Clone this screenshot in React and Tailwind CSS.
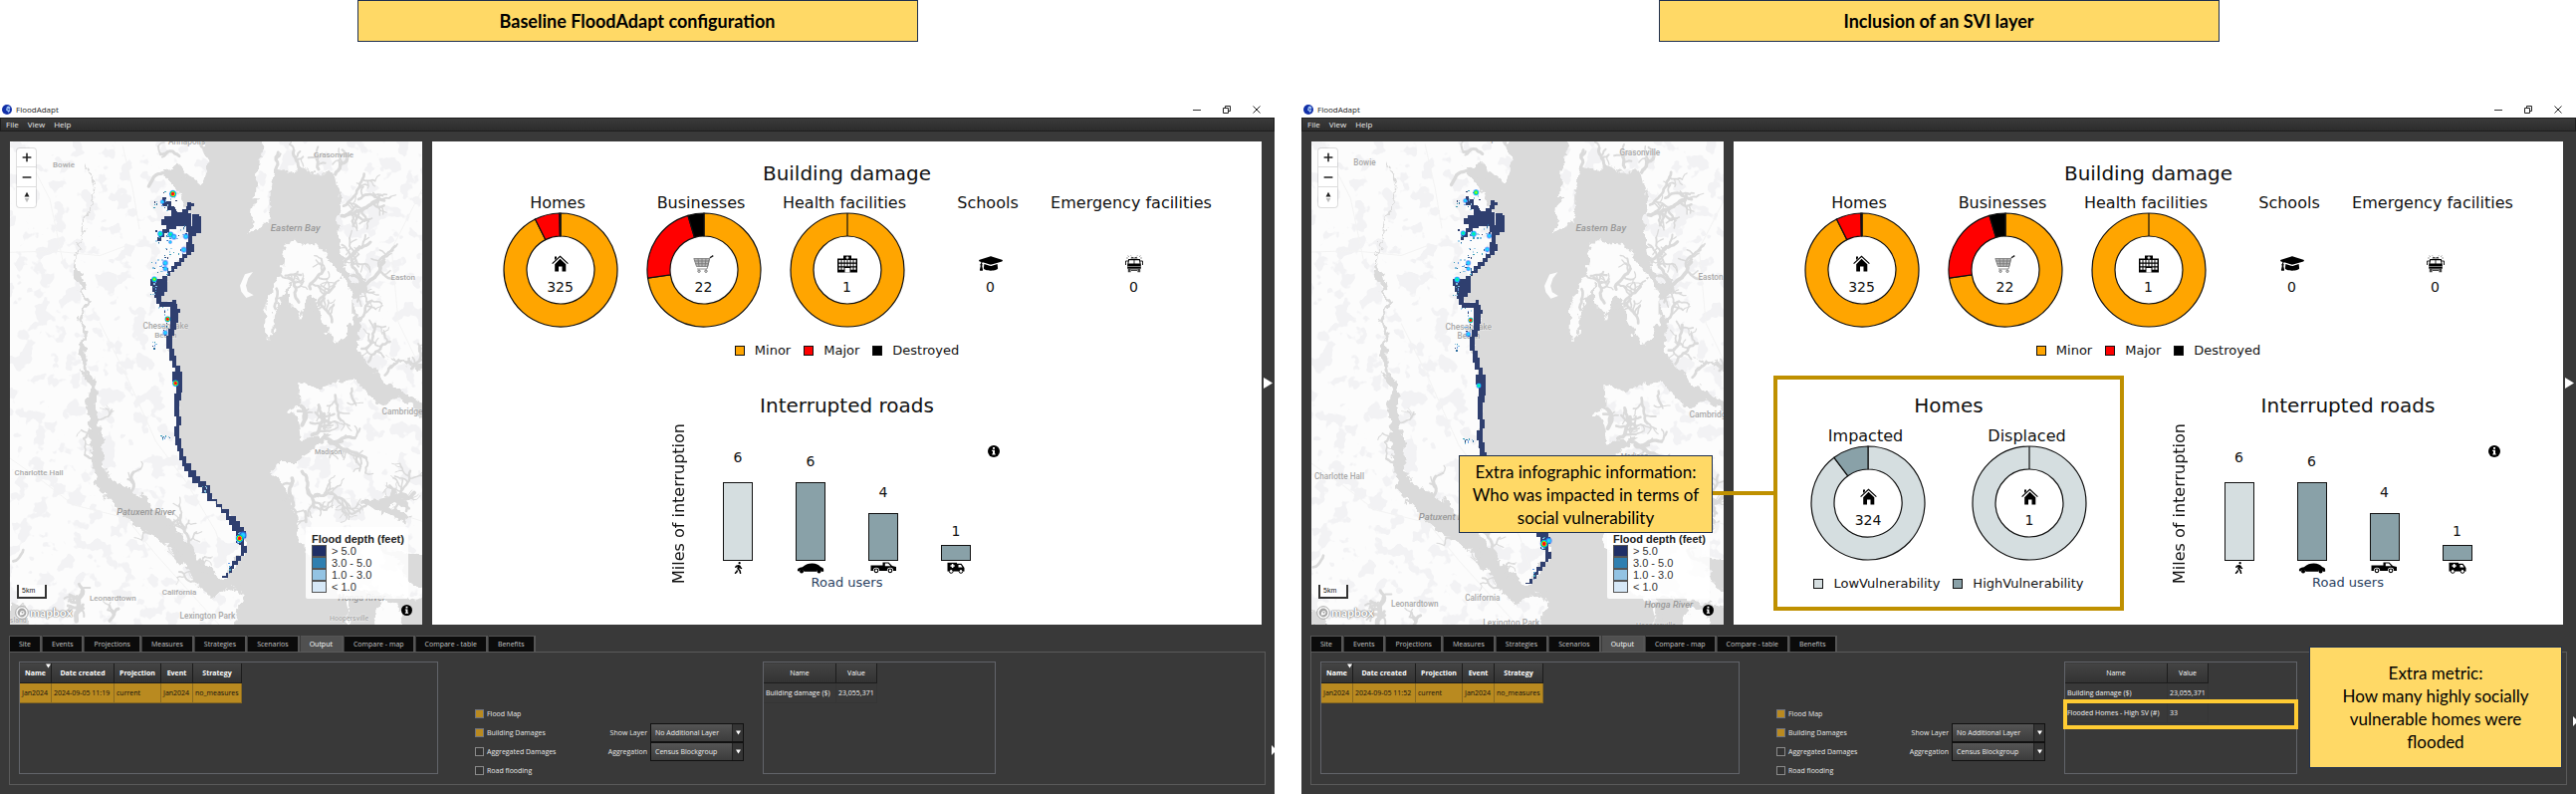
import React from "react";
import { FaGraduationCap, FaWalking } from "react-icons/fa";

/* ---------- map drawing ---------- */

function makeRandom(seed) {
  let s = seed;
  return () => {
    s = (s * 1664525 + 1013904223) % 4294967296;
    return s / 4294967296;
  };
}

function growCreek(rand, x, y, angle, length, width, depth, out) {
  let px = x;
  let py = y;
  let a = angle;
  const steps = Math.max(3, Math.round(length / 10));
  let d = `M${px.toFixed(0)} ${py.toFixed(0)}`;
  for (let i = 0; i < steps; i++) {
    a += (rand() - 0.5) * 1.3 + (angle - a) * 0.2;
    px += Math.cos(a) * 8;
    py += Math.sin(a) * 8;
    d += `L${px.toFixed(0)} ${py.toFixed(0)}`;
    if (depth > 0 && i > 0 && rand() < 0.38) {
      const side = rand() < 0.5 ? -1 : 1;
      growCreek(rand, px, py, a + side * (0.7 + rand() * 0.6), length * 0.35, width * 0.65, depth - 1, out);
    }
  }
  out.push({ d, w: width });
}

const creekSeeds = [
  [500, 250, 3.4, 90, 10], [540, 200, 3.8, 80, 9], [620, 190, 4.2, 40, 8], [560, 270, 2.8, 50, 8],
  [830, 240, 4.9, 70, 9], [900, 235, 4.6, 70, 9], [960, 240, 4.7, 60, 9], [1010, 255, 5.3, 90, 10],
  [1030, 380, 5.9, 150, 11], [1035, 350, 5.4, 150, 8], [1080, 330, 6.1, 110, 8],
  [1040, 520, 5.4, 130, 9], [1060, 590, 5.6, 170, 11], [1090, 580, 5.1, 160, 9], [1060, 560, 0.1, 90, 9],
  [860, 560, 5.6, 60, 7], [900, 640, 4.7, 110, 9], [935, 600, 5.0, 100, 9], [960, 650, 5.3, 100, 8],
  [1000, 700, 5.4, 110, 8], [1070, 700, 5.6, 110, 8], [1090, 780, 5.9, 120, 8], [1110, 820, 5.6, 120, 8],
  [830, 660, 4.9, 80, 8], [1160, 860, 5.2, 80, 8], [1240, 840, 5.1, 90, 8],
  [910, 1010, 5.3, 80, 12], [940, 1040, 5.6, 100, 11], [980, 1050, 5.9, 120, 10], [960, 950, 1.2, 90, 9],
  [1010, 920, 1.7, 100, 8], [990, 1060, 0.2, 160, 9], [1060, 900, 1.3, 60, 7],
  [880, 1170, 1.1, 120, 11], [910, 1150, 1.3, 150, 10], [950, 1220, 0.4, 150, 8], [1010, 1230, 0.1, 170, 7],
  [1190, 1260, 4.9, 160, 7], [1150, 1240, 0.3, 100, 18], [870, 1240, 1.0, 70, 8], [920, 1270, 1.9, 40, 8],
  [395, 1210, 5.0, 80, 9], [290, 1000, 5.6, 80, 5], [280, 1025, 3.4, 50, 7], [290, 1120, 3.3, 50, 7],
  [580, 1380, 4.7, 140, 8], [560, 1420, 3.5, 80, 7], [640, 1460, 4.5, 70, 7], [610, 1450, 5.1, 90, 6],
  [470, 1330, 2.4, 50, 7], [700, 1500, 0.2, 40, 7], [230, 1600, 4.6, 120, 14], [330, 1600, 5.3, 60, 9],
  [40, 1420, 5.7, 60, 8], [590, 1480, 3.2, 80, 6], [1060, 1600, 4.4, 50, 8], [1180, 1400, 4.2, 60, 10],
];

const creeks = (() => {
  const out = [];
  const rand = makeRandom(77);
  creekSeeds.forEach(([x, y, a, len, w]) => growCreek(rand, x, y, a, len, w, 2, out));
  return out;
})();

const fringeAreas = [
  [480, 350, 28, 16, 12], [510, 320, 20, 16, 8], [490, 440, 22, 18, 12], [530, 490, 36, 18, 14],
  [515, 440, 24, 16, 12], [555, 430, 14, 22, 8], [475, 530, 20, 22, 12], [462, 590, 8, 30, 10],
  [490, 660, 16, 14, 7], [500, 540, 22, 16, 8], [495, 720, 8, 22, 7], [462, 765, 5, 18, 8],
  [502, 1045, 22, 6, 12], [612, 1205, 10, 12, 8], [715, 1345, 6, 20, 10], [692, 1440, 8, 20, 6],
];

const fringe = (() => {
  const rand = makeRandom(9);
  const colours = ["#2f6f9f", "#86bfe0", "#2f4070", "#6a9fe8", "#3f9fb8", "#a9d3ec"];
  const out = [];
  fringeAreas.forEach(([cx, cy, rx, ry, n]) => {
    for (let i = 0; i < n; i++) {
      const x = Math.round((cx + (rand() - 0.5) * 2 * rx) / 3) * 3;
      const y = Math.round((cy + (rand() - 0.5) * 2 * ry) / 3) * 3;
      out.push({ x, y, w: rand() < 0.4 ? 6 : 3, h: rand() < 0.3 ? 6 : 3, c: colours[Math.floor(rand() * 6)] });
    }
  });
  return out;
})();

const baselineSpots = [
  ["hot", 521, 314, 11], ["cool", 483, 434, 9], ["cool", 514, 436, 9], ["blue", 524, 443, 9], ["blue", 560, 442, 9],
  ["blue", 554, 482, 9], ["blue", 498, 522, 9], ["blue", 498, 539, 8], ["warm", 465, 571, 9], ["hot", 505, 691, 9],
  ["blue", 498, 732, 8], ["blue", 489, 338, 7], ["hot", 529, 884, 10], ["blue", 732, 1342, 12], ["hot", 722, 1351, 12],
  ["blue", 513, 459, 6],
];

const sviSpots = [
  ["warm", 521, 314, 9], ["cool", 483, 434, 8], ["cool", 514, 436, 9], ["blue", 560, 442, 8], ["blue", 554, 482, 8],
  ["blue", 498, 522, 8], ["blue", 498, 539, 7], ["cool", 465, 571, 9], ["hot", 505, 691, 8], ["blue", 498, 732, 8],
  ["blue", 489, 338, 7], ["cool", 529, 884, 8], ["blue", 736, 1342, 10], ["hot", 722, 1351, 12],
];

const places = [
  ["Annapolis", 563, 164, false, 25], ["Bowie", 192, 235, false, 24], ["Grasonville", 1005, 203, false, 24],
  ["Easton", 1214, 573, false, 24], ["Chesapeake", 499, 719, false, 25], ["Beach", 499, 747, false, 24],
  ["Charlotte Hall", 117, 1160, false, 24], ["Cambridge", 1212, 979, false, 25], ["Madison", 989, 1098, false, 21],
  ["California", 540, 1520, false, 24], ["Leonardtown", 340, 1538, false, 24], ["Lexington Park", 625, 1592, false, 25],
  ["Hoopersville", 1052, 1598, false, 21], ["Eastern Bay", 890, 427, true, 29], ["Patuxent River", 440, 1281, true, 28],
  ["Honga River", 1090, 1540, true, 27], ["Island", 52, 1604, false, 21],
];

function Terrain({ id, variant }) {
  const spots = variant === "svi" ? sviSpots : baselineSpots;
  return (
    <svg viewBox="30 156 1242 1455" preserveAspectRatio="xMidYMid slice" className="absolute inset-0 h-full w-full" aria-hidden="true">
      <defs>
        <filter id={`${id}-coast`} x="-5%" y="-5%" width="110%" height="110%" colorInterpolationFilters="sRGB">
          <feTurbulence type="fractalNoise" baseFrequency="0.04" numOctaves="3" seed="4" result="n" />
          <feDisplacementMap in="SourceGraphic" in2="n" scale="36" xChannelSelector="R" yChannelSelector="G" />
        </filter>
        <filter id={`${id}-patch`} x="0" y="0" width="100%" height="100%" colorInterpolationFilters="sRGB">
          <feTurbulence type="fractalNoise" baseFrequency="0.02" numOctaves="3" seed="12" />
          <feColorMatrix values="0 0 0 0 .95 0 0 0 0 .95 0 0 0 0 .958 20 0 0 0 -11.2" />
        </filter>
        <radialGradient id={`${id}-hot`}>
          <stop offset="0" stopColor="#f00" /><stop offset=".4" stopColor="#f22" /><stop offset=".52" stopColor="#dd0" />
          <stop offset=".68" stopColor="#0d5" /><stop offset=".82" stopColor="#0bf" /><stop offset="1" stopColor="#35f" stopOpacity=".4" />
        </radialGradient>
        <radialGradient id={`${id}-warm`}>
          <stop offset="0" stopColor="#ef0" /><stop offset=".5" stopColor="#1e5" /><stop offset=".75" stopColor="#0cf" />
          <stop offset="1" stopColor="#35f" stopOpacity=".4" />
        </radialGradient>
        <radialGradient id={`${id}-cool`}>
          <stop offset="0" stopColor="#1e7" /><stop offset=".45" stopColor="#0ec" /><stop offset=".7" stopColor="#1bf" />
          <stop offset="1" stopColor="#35f" stopOpacity=".4" />
        </radialGradient>
        <radialGradient id={`${id}-blue`}>
          <stop offset="0" stopColor="#2ef" /><stop offset=".5" stopColor="#2bf" /><stop offset="1" stopColor="#35f" stopOpacity=".4" />
        </radialGradient>
      </defs>
      <rect x="0" y="100" width="1300" height="1600" fill="#fcfcfc" />
      <g transform={variant === "svi" ? "translate(270 525) scale(1.02) translate(-270 -525)" : undefined}>
        <rect x="0" y="100" width="1300" height="1550" filter={`url(#${id}-patch)`} />
        <g fill="none" stroke="#f3f3f3" strokeWidth="3">
          <path d="M30 490L160 486 300 500 380 470 M60 156L150 330 190 520 M30 1110L130 1180 220 1250 380 1290 470 1400 560 1500 660 1611 M370 170L400 300 420 420 M300 700L380 860 470 1060 560 1180 650 1330 690 1450 M1272 300L1180 480 1200 700 1272 850 M930 1250L1060 1230 1272 1300" />
        </g>
        <g filter={`url(#${id}-coast)`} fill="#dadada">
          <path d="M600 130 805 130 775 235 770 330 752 435 812 392 812 290 832 240 870 250 900 236 950 250 1010 250 1030 330 1015 400 1030 500 1062 590 1100 570 1110 600 1060 640 1085 700 1075 770 1100 820 1150 870 1200 900 1290 960 1290 830 1150 800 1290 850 1290 990 1200 925 1150 950 1100 910 1070 872 1010 880 960 900 900 878 905 950 868 966 900 1000 910 1050 1000 1040 950 1075 890 1122 830 1122 816 1150 862 1205 890 1285 900 1360 930 1400 960 1480 1040 1530 1050 1640 705 1640 715 1560 742 1522 690 1500 640 1530 600 1500 560 1440 500 1370 420 1320 350 1260 290 1190 280 1140 275 1090 270 1030 262 960 275 900 240 840 290 870 284 960 300 1020 312 1060 306 1095 330 1170 420 1220 520 1300 580 1390 630 1440 676 1476 720 1410 738 1395 738 1350 690 1290 625 1210 560 1130 530 1060 535 970 540 880 515 810 512 740 530 680 522 640 480 640 490 590 520 540 580 480 565 430 590 420 600 380 570 370 530 300 480 240 540 230 610 290 625 225Z" />
          <path d="M860 470 880 458 960 470 1000 520 1040 580 1060 620 1060 700 1020 766 965 700 960 645 930 610 905 680 870 640 870 570 825 680 822 745 798 745 800 640 850 545Z" fill="#fcfcfc" />
          <path d="M1090 1240 1160 1235 1240 1290 1215 1300 1150 1275ZM1180 1390 1290 1400 1290 1500 1240 1490ZM30 1560 70 1540 90 1620 30 1620Z" />
          <path d="M1050 1500 1290 1540 1290 1640 1050 1640Z" />
          <path d="M1150 1540 1200 1550 1220 1640 1120 1640Z" fill="#fcfcfc" />
        </g>
        <path d="M762 549 738 556 723 590 727 608 742 627 764 619 746 608 741 590 748 568Z" fill="#fcfcfc" />
        <g fill="none" stroke="#dadada" strokeLinejoin="round" filter={`url(#${id}-coast)`}>
          <path d="M255 220L285 290 275 350 250 400 240 480 225 495 225 540" strokeWidth="4" />
          <path d="M225 530L245 600 262 640 240 690 258 740 245 790 262 850 280 900" strokeWidth="10" />
          <path d="M228 540L250 600" strokeWidth="20" />
        </g>
        <g fill="none" stroke="#dadada" strokeLinecap="round" strokeLinejoin="round">
          {creeks.map((c, i) => (
            <path key={i} d={c.d} strokeWidth={c.w} />
          ))}
        </g>
        <g stroke="#fcfcfc" strokeOpacity=".5" textAnchor="middle" className="[font-family:Roboto,'Liberation_Sans',sans-serif] font-medium [paint-order:stroke]">
          {places.map(([name, x, y, italic, size]) => (
            <text key={name} x={x} y={y} fontSize={size} fontStyle={italic ? "italic" : "normal"} fill={italic ? "#989898" : "#a8a8a8"} strokeWidth={italic ? 0 : 3}>
              {name}
            </text>
          ))}
        </g>
        <g shapeRendering="crispEdges">
          <path
            fill="#2f3f6f"
            d="M480 350H490V325H500V335H515V350H525L535 370H550V360H560V350H565V338H575V343H585V352H575V362H568V372H575V410H580V375H600V382H606V432H590V440H580V465H585V488H575V498H565V508H555V520H545V530H535V540H525V550H512V560H505V610H495V622H485V640H520V632H530V645H535V660H542V672H536V702H532V722H526V740H518V780H525V800H532V830H542V850H550V912H545V935H540V985H545V1010H540V1050H545V1080H552V1105H562V1125H575V1145H590V1165H602V1180H620V1190H632V1215H640V1232H655V1248H670V1264H690V1285H710V1300H722V1318H735V1330H742V1350H735V1375H744V1395H735V1405H725V1418H716V1430H706V1442H698V1455H688V1470H668V1465H680V1455H690V1435H700V1420H712V1405H725V1370H720V1345H710V1330H700V1310H690V1295H680V1275H665V1258H650V1240H625V1215H610V1198H598V1185H580V1168H568V1150H555V1135H548V1115H540V1090H533V1070H528V1045H524V1015H532V985H526V915H530V880H520V850H528V838H518V815H510V780H502V740H508V720H514V700H514V655H480V645H470V628H465V608H458V590H452V570H490V560H505V545H515V530H525V520H540V508H550V495H560V460H568V430H560V412H530V420H510V432H495V445H485V455H475V445H480V432H490V420H500V408H485V390H495V380H515V362H505V350Z"
          />
          {fringe.map((f, i) => (
            <rect key={i} x={f.x} y={f.y} width={f.w} height={f.h} fill={f.c} />
          ))}
        </g>
        {spots.map(([kind, x, y, r], i) => (
          <ellipse key={i} cx={x} cy={y} rx={r} ry={r * 1.05} fill={`url(#${id}-${kind})`} />
        ))}
      </g>
    </svg>
  );
}

function InfoDot({ className }) {
  return (
    <svg viewBox="0 0 12 12" className={className} aria-hidden="true">
      <circle cx="6" cy="6" r="6" fill="#000" />
      <path d="M5 2h2v1.8H5zM4.2 4.8H7v3.6h.8v1.2H4.2V8.4H5V6h-.8z" fill="#fff" />
    </svg>
  );
}

const depths = [
  ["> 5.0", "bg-[#1f2f66]"],
  ["3.0 - 5.0", "bg-[#2f7fb0]"],
  ["1.0 - 3.0", "bg-[#93c3e3]"],
  ["< 1.0", "bg-[#d6e8f7]"],
];

function FloodMap({ id, variant }) {
  return (
    <div className="relative w-[414px] shrink-0 overflow-hidden bg-[#fcfcfc]">
      <Terrain id={id} variant={variant} />
      <div className="absolute top-[7px] left-[7px] flex w-[19px] flex-col divide-y divide-[#ddd] rounded-[3px] bg-white shadow-[0_0_0_1px_rgba(0,0,0,0.12)]">
        <button type="button" aria-label="Zoom in" className="flex h-[19px] items-center justify-center">
          <svg viewBox="0 0 10 10" className="size-[10px]"><path d="M5 1.2v7.6M1.2 5h7.6" stroke="#222" strokeWidth="1.6" strokeLinecap="round" /></svg>
        </button>
        <button type="button" aria-label="Zoom out" className="flex h-[20px] items-center justify-center">
          <svg viewBox="0 0 10 10" className="size-[10px]"><path d="M1.2 5h7.6" stroke="#222" strokeWidth="1.6" strokeLinecap="round" /></svg>
        </button>
        <button type="button" aria-label="Reset bearing to north" className="flex h-[20px] items-center justify-center">
          <svg viewBox="0 0 10 12" className="h-[12px] w-[10px]"><path d="M5 .8 7.5 5.6H2.5z" fill="#222" /><path d="M5 11.2 7.3 7H2.7z" fill="#bbb" /></svg>
        </button>
      </div>
      <div className="absolute bottom-[26px] left-[7px] h-[14px] w-[30px] border-2 border-t-0 border-[#333] bg-white/70 pl-[3px] [font-family:'Liberation_Sans',Arial,sans-serif] text-[7px] leading-[12px] text-[#222]">
        5km
      </div>
      <div className="absolute bottom-[5px] left-[5px] flex items-center gap-px">
        <svg viewBox="0 0 14 14" className="size-[14px]" aria-hidden="true">
          <circle cx="7" cy="7" r="6.3" fill="#fff" stroke="#a5a5a5" />
          <circle cx="7" cy="7" r="4.4" fill="#a5a5a5" />
          <path d="M5 9.4c-.4-2 .1-4 2-4.5 1.6-.2 2.8 1 2.5 2.4C9 9 7 9.7 5 9.4z" fill="#fff" />
          <circle cx="7.5" cy="6.8" r="1" fill="#a5a5a5" />
        </svg>
        <span className="[font-family:Lato,sans-serif] text-[12px] leading-[14px] font-bold text-white [text-shadow:0_0_1px_#777,0_0_1px_#777,0_0_2px_#999]">mapbox</span>
      </div>
      <div className="absolute right-[14px] bottom-[26px] w-[103px] rounded-[2px] bg-white/85 px-[6px] pt-[6px] pb-[6px] [font-family:'Liberation_Sans',Arial,sans-serif] text-[11px] leading-[12px] text-[#333]">
        <p className="font-bold whitespace-nowrap text-[#222]">Flood depth (feet)</p>
        <ul>
          {depths.map(([label, colour]) => (
            <li key={label} className="flex items-center gap-[5px]">
              <span className={`h-[12px] w-[15px] border border-[#555] ${colour}`} />
              {label}
            </li>
          ))}
        </ul>
      </div>
      <button type="button" aria-label="Map information" className="absolute right-[10px] bottom-[9px]">
        <InfoDot className="size-[11px]" />
      </button>
    </div>
  );
}

/* ---------- infographic ---------- */

function HomeIcon() {
  return (
    <svg viewBox="0 0 17 17" className="h-[17px] w-[17px]" aria-hidden="true">
      <path d="M8.5 3.8 14.3 9.2V16.5H10.5V11.5H7V16.5H3.2V9.2Z" fill="#000" />
      <path d="M.6 8.6 8.5 1.2 16.4 8.6" fill="none" stroke="#000" strokeWidth="1.2" />
      <path d="M3 1.5H5V3.2L3 5Z" fill="#000" />
    </svg>
  );
}

function CartIcon() {
  return (
    <svg viewBox="0 0 21 18" className="h-[18px] w-[21px]" aria-hidden="true">
      <path d="M.8 3.5H16.5L14.8 11.5H3.5Z" fill="#b5b5b5" />
      <path d="M.8 3.5H16.5L14.8 11.5H3.5ZM1.5 6H16M2.4 8.7H15.4M5 3.5 6 11.5M9 3.5V11.5M13 3.5 12 11.5M4 14H14L17 2.5 20 .8" fill="none" stroke="#777" strokeWidth=".8" />
      <path d="M17 2.8 20.3.6" stroke="#222" strokeWidth="1.3" />
      <circle cx="6" cy="16.2" r="1.2" fill="none" stroke="#555" strokeWidth=".8" />
      <circle cx="13" cy="16.2" r="1.2" fill="none" stroke="#555" strokeWidth=".8" />
    </svg>
  );
}

function HospitalIcon() {
  return (
    <svg viewBox="0 0 20 18" className="h-[18px] w-[20px]" aria-hidden="true">
      <path d="M0 3.5H6V.5H14V3.5H20V17.5H0Z" fill="#000" />
      <path d="M9.5 1.2h1v1h1v1h-1v1h-1v-1h-1v-1h1zM1.5 5h2v2.5h-2zM4.5 5h2v2.5h-2zM7.5 5h2v2.5h-2zM10.5 5h2v2.5h-2zM13.5 5h2v2.5h-2zM16.5 5h2v2.5h-2zM1.5 8.8h2v2.5h-2zM4.5 8.8h2v2.5h-2zM7.5 8.8h2v2.5h-2zM10.5 8.8h2v2.5h-2zM13.5 8.8h2v2.5h-2zM16.5 8.8h2v2.5h-2zM1.5 12.5h2v2.2h-2zM4.5 12.5h2v2.2h-2zM16.5 12.5h2v2.2h-2zM13.5 12.5h2v2.2h-2zM7.5 13h5v4.5h-5z" fill="#fff" />
    </svg>
  );
}

function SchoolIcon() {
  return <FaGraduationCap className="h-[19px] w-[24px] text-black" aria-hidden="true" />;
}

function EmergencyIcon() {
  return (
    <svg viewBox="0 0 18 18" className="h-[18px] w-[18px]" aria-hidden="true">
      <path d="M5.5 3.5a1.8 1.8 0 0 1 3.5 0 1.8 1.8 0 0 1 3.5 0z" fill="#333" />
      <path d="M2.5.6 4 1.8M1 3h2M15.5.6 14 1.8M17 3h-2M5.6.3 6.4 1.3M12.4.3 11.6 1.3" stroke="#777" strokeWidth=".7" />
      <path d="M3.2 4H14.8L15.8 9.5V13.8H2.2V9.5Z" fill="#000" />
      <path d="M4 5.2H8.6V8.5H3.4zM9.4 5.2H14L14.6 8.5H9.4z" fill="#fff" />
      <path d="M.5 6v4M17.5 6v4M.5 6H3M15 6h2.5" stroke="#222" strokeWidth="1" />
      <path d="M2.2 11.5H15.8M4 14.5H14" stroke="#aaa" strokeWidth=".7" />
      <path d="M2.8 14H5.6V17.3H2.8zM12.4 14H15.2V17.3H12.4zM6 14.5h6v1.6H6z" fill="#444" />
    </svg>
  );
}

function Ring({ slices }) {
  const c = 58;
  const outer = 57;
  const inner = 34;
  const point = (r, f) => {
    const a = f * Math.PI * 2 - Math.PI / 2;
    return `${(c + r * Math.cos(a)).toFixed(2)} ${(c + r * Math.sin(a)).toFixed(2)}`;
  };
  let at = 0;
  const total = slices.reduce((s, x) => s + x.value, 0);
  return (
    <svg viewBox="0 0 116 116" className="absolute inset-0 h-full w-full" aria-hidden="true">
      {slices.map((s, i) => {
        const from = at / total;
        at += s.value;
        const to = at / total;
        if (slices.length === 1) {
          return (
            <g key={i}>
              <circle cx={c} cy={c} r={(outer + inner) / 2} fill="none" stroke={s.colour} strokeWidth={outer - inner} />
              <circle cx={c} cy={c} r={outer} fill="none" stroke="#111" strokeWidth="1.2" />
              <circle cx={c} cy={c} r={inner} fill="none" stroke="#111" strokeWidth="1.2" />
              <path d={`M${c} ${c - outer}V${c - inner}`} stroke="#111" strokeWidth="1.2" />
            </g>
          );
        }
        const big = to - from > 0.5 ? 1 : 0;
        return (
          <path
            key={i}
            d={`M${point(outer, from)}A${outer} ${outer} 0 ${big} 1 ${point(outer, to)}L${point(inner, to)}A${inner} ${inner} 0 ${big} 0 ${point(inner, from)}Z`}
            fill={s.colour}
            stroke="#111"
            strokeWidth="1.2"
          />
        );
      })}
    </svg>
  );
}

function Donut({ label, Icon, count, slices }) {
  return (
    <figure className="flex w-[144px] flex-col items-center">
      <figcaption className="pr-[5px] text-[16px] leading-[20px] whitespace-nowrap">{label}</figcaption>
      <div className="relative -mt-px flex size-[116px] flex-col items-center justify-center gap-[4px] pt-[9px]">
        {slices.length > 0 && <Ring slices={slices} />}
        <div className="flex h-[20px] items-center">
          <Icon />
        </div>
        <span className="text-[14px] leading-[18px]">{count}</span>
      </div>
    </figure>
  );
}

function Legend({ items }) {
  return (
    <ul className="flex justify-center gap-[13px] text-[13px] leading-[18px]">
      {items.map(([label, colour]) => (
        <li key={label} className="flex items-center gap-[10px]">
          <span className={`size-[10px] border border-[#111] ${colour}`} />
          {label}
        </li>
      ))}
    </ul>
  );
}

const minor = "#ffa500";
const major = "#ff0000";
const destroyed = "#000000";
const low = "#d5dee0";
const high = "#89a1a8";

const buildings = [
  { label: "Homes", Icon: HomeIcon, count: 325, slices: [{ value: 301, colour: minor }, { value: 23, colour: major }, { value: 1, colour: destroyed }] },
  { label: "Businesses", Icon: CartIcon, count: 22, slices: [{ value: 16, colour: minor }, { value: 5, colour: major }, { value: 1, colour: destroyed }] },
  { label: "Health facilities", Icon: HospitalIcon, count: 1, slices: [{ value: 1, colour: minor }] },
  { label: "Schools", Icon: SchoolIcon, count: 0, slices: [] },
  { label: "Emergency facilities", Icon: EmergencyIcon, count: 0, slices: [] },
];

function CarGlyph() {
  return (
    <svg viewBox="0 0 30 12" className="h-[11px] w-[30px]" aria-hidden="true">
      <path d="M1 9C0 6.5 2 5 6 4.5 10 1.5 13 .5 17 .6 21 .8 24 2 26 4.3 29 5 29.8 6.5 29.3 9.5H27A3 3 0 0 0 21.5 9.6H8A3 3 0 0 0 2.6 9.3Z" fill="#000" />
      <circle cx="5.2" cy="9.2" r="2.2" fill="#000" /><circle cx="24.3" cy="9.2" r="2.2" fill="#000" />
    </svg>
  );
}

function PickupGlyph() {
  return (
    <svg viewBox="0 0 27 12" className="h-[12px] w-[27px]" aria-hidden="true">
      <path d="M.5 3.5H12.5V.4H18.5L22 4 26 5V9H.5Z" fill="#000" />
      <path d="M14.8 1.5H18L20.3 4.3H14.8Z" fill="#fff" />
      <circle cx="6" cy="8.8" r="3.1" fill="#fff" /><circle cx="20" cy="8.8" r="3.1" fill="#fff" />
      <circle cx="6" cy="8.8" r="1.8" fill="none" stroke="#000" strokeWidth="1.2" /><circle cx="20" cy="8.8" r="1.8" fill="none" stroke="#000" strokeWidth="1.2" />
    </svg>
  );
}

function AmbulanceGlyph() {
  return (
    <svg viewBox="0 0 18 12" className="h-[12px] w-[18px]" aria-hidden="true">
      <path d="M.5 .8H10V1.8H14.5L17.5 6V9.5H.5Z" fill="#000" />
      <path d="M4.8 2h1.6v1.3h1.3v1.5H6.4v1.3H4.8V4.8H3.5V3.3h1.3zM11.5 3H14L15.5 5.5H11.5Z" fill="#fff" />
      <circle cx="4.2" cy="9.4" r="1.9" fill="#fff" stroke="#000" /><circle cx="14" cy="9.4" r="1.9" fill="#fff" stroke="#000" />
    </svg>
  );
}

function WalkGlyph() {
  return <FaWalking className="h-[12px] w-[9px] text-black" aria-hidden="true" />;
}

const roads = [
  { value: 6, bar: "h-[79px] bg-[#d5dee0]", gap: "mb-[16px]", Glyph: WalkGlyph, name: "Pedestrians" },
  { value: 6, bar: "h-[79px] bg-[#89a1a8]", gap: "mb-[12px]", Glyph: CarGlyph, name: "Cars" },
  { value: 4, bar: "h-[48px] bg-[#89a1a8]", gap: "mb-[12px]", Glyph: PickupGlyph, name: "Trucks" },
  { value: 1, bar: "h-[16px] bg-[#89a1a8]", gap: "mb-[5px]", Glyph: AmbulanceGlyph, name: "Emergency vehicles" },
];

function RoadsChart() {
  return (
    <section className="relative flex w-[360px] flex-col items-center pt-[18px]">
      <h2 className="text-[20px] leading-[24px]">Interrupted roads</h2>
      <div className="mt-[2px] flex w-full items-end">
        <p className="mb-[2px] h-[170px] w-[22px] rotate-180 text-center text-[16px] leading-[22px] whitespace-nowrap [writing-mode:vertical-rl]">
          Miles of interruption
        </p>
        <div className="flex w-[316px] flex-col items-center">
          <div className="flex items-end gap-[43px]">
            {roads.map(({ value, bar, gap, Glyph, name }) => (
              <div key={name} className="flex w-[30px] flex-col items-center">
                <span className={`text-[14px] leading-[18px] ${gap}`}>{value}</span>
                <span className={`w-full border border-[#111] ${bar}`} />
                <span className="flex h-[14px] items-center justify-center">
                  <Glyph />
                </span>
              </div>
            ))}
          </div>
          <p className="text-[13px] leading-[16px] text-[#2a3f5f]">Road users</p>
        </div>
      </div>
      <button type="button" aria-label="About interrupted roads" className="absolute top-[70px] right-[27px]">
        <InfoDot className="size-[12px]" />
      </button>
    </section>
  );
}

function VulnerabilityPanel() {
  return (
    <section className="relative flex h-[236px] w-[352px] flex-col items-center border-4 border-[#bf9000] pt-[14px]">
      <h2 className="text-[20px] leading-[24px]">Homes</h2>
      <div className="mt-[9px] flex gap-[18px]">
        <Donut label="Impacted" Icon={HomeIcon} count={324} slices={[{ value: 291, colour: low }, { value: 33, colour: high }]} />
        <Donut label="Displaced" Icon={HomeIcon} count={1} slices={[{ value: 1, colour: low }]} />
      </div>
      <div className="mt-[14px]">
        <Legend items={[["LowVulnerability", "bg-[#d5dee0]"], ["HighVulnerability", "bg-[#89a1a8]"]]} />
      </div>
      <div className="absolute top-[112px] right-full mr-[4px] h-[4px] w-[61px] bg-[#bf9000]" />
      <Note className="absolute top-[76px] right-full mr-[65px] h-[78px] w-[255px] pt-[4px]">
        Extra infographic information:
        <br />
        Who was impacted in terms of
        <br />
        social vulnerability
      </Note>
    </section>
  );
}

function Note({ className, children }) {
  return (
    <p className={`z-10 border border-[#1f3050] bg-[#ffd966] text-center [font-family:Lato,'Open_Sans',sans-serif] text-[17px] leading-[23px] whitespace-nowrap text-black ${className}`}>
      {children}
    </p>
  );
}

function Infographic({ variant }) {
  return (
    <div className="h-[485px] min-w-0 flex-1 bg-white [font-family:'DejaVu_Sans',Verdana,sans-serif] text-[#111]">
      <section className="flex h-[235px] flex-col items-center pt-[20px]">
        <h2 className="text-[20px] leading-[24px]">Building damage</h2>
        <div className="mt-[8px] flex">
          {buildings.map((b) => (
            <Donut key={b.label} {...b} />
          ))}
        </div>
        <div className="mt-[14px]">
          <Legend items={[["Minor", "bg-[#ffa500]"], ["Major", "bg-[#ff0000]"], ["Destroyed", "bg-black"]]} />
        </div>
      </section>
      {variant === "svi" ? (
        <div className="flex items-start gap-[45px] pl-[40px]">
          <VulnerabilityPanel />
          <RoadsChart />
        </div>
      ) : (
        <div className="flex justify-center">
          <RoadsChart />
        </div>
      )}
    </div>
  );
}

/* ---------- lower panel ---------- */

const tabs = ["Site", "Events", "Projections", "Measures", "Strategies", "Scenarios", "Output", "Compare - map", "Compare - table", "Benefits"];

function Check({ id, label, checked }) {
  return (
    <div className="flex h-[19px] items-center gap-[3px]">
      <input
        id={id}
        type="checkbox"
        defaultChecked={checked}
        className="size-[9px] appearance-none border border-[#8a8a8a] bg-[#333] checked:border-[#6f7480] checked:bg-[#b98a20]"
      />
      <label htmlFor={id} className="whitespace-nowrap">{label}</label>
    </div>
  );
}

function Picker({ id, label, value }) {
  return (
    <div className="flex h-[19px] items-center justify-end gap-[3px]">
      <label htmlFor={id} className="whitespace-nowrap">{label}</label>
      <div className="relative h-full w-[94px]">
        <select id={id} className="h-full w-full appearance-none border border-[#111] bg-linear-to-b from-[#555] to-[#3c3c3c] pl-[4px] text-[7px] text-[#eee]">
          <option>{value}</option>
        </select>
        <span className="pointer-events-none absolute inset-y-px right-px flex w-[11px] items-center justify-center border-l border-[#222] bg-[#353535]">
          <svg viewBox="0 0 6 5" className="h-[5px] w-[5px]" aria-hidden="true"><path d="M0 0H6L3 5Z" fill="#fff" /></svg>
        </span>
      </div>
    </div>
  );
}

const headCell = "h-[20px] border-r border-b border-[#1c1c1c] bg-linear-to-b from-[#444] to-[#333] text-center text-white";

function ScenarioTable({ created }) {
  return (
    <div className="h-[113px] w-[421px] border border-[#62646a] pt-px">
      <table className="w-[223px] table-fixed border-separate border-spacing-0">
        <colgroup>
          <col className="w-[32px]" /><col className="w-[63px]" /><col className="w-[47px]" /><col className="w-[32px]" /><col className="w-[49px]" />
        </colgroup>
        <thead>
          <tr>
            {["Name", "Date created", "Projection", "Event", "Strategy"].map((h, i) => (
              <th key={h} className={`relative ${headCell} p-0 font-bold`}>
                {h}
                {i === 0 && (
                  <svg viewBox="0 0 6 5" className="absolute top-0 right-0 h-[5px] w-[5px]" aria-hidden="true"><path d="M0 0H6L3 5Z" fill="#fff" /></svg>
                )}
              </th>
            ))}
          </tr>
        </thead>
        <tbody>
          <tr>
            {["Jan2024", created, "current", "Jan2024", "no_measures"].map((v, i) => (
              <td key={i} className="h-[20px] border-r border-b border-[#8a6a20] bg-[#b98a20] p-0 pl-[2px] font-medium whitespace-nowrap text-[#111]">{v}</td>
            ))}
          </tr>
        </tbody>
      </table>
    </div>
  );
}

function MetricsTable({ variant }) {
  const svi = variant === "svi";
  const rows = svi ? [["Building damage ($)", "23,055,371"], ["Flooded Homes - High SV (#)", "33"]] : [["Building damage ($)", "23,055,371"]];
  return (
    <div className="relative h-[113px] w-[234px] border border-[#62646a] pt-px">
      <table className={`table-fixed border-separate border-spacing-0 ${svi ? "w-[144px]" : "w-[114px]"}`}>
        <colgroup>
          <col className={svi ? "w-[103px]" : "w-[73px]"} /><col className="w-[41px]" />
        </colgroup>
        <thead>
          <tr>
            <th className={`${headCell} p-0 font-normal`}>Name</th>
            <th className={`${headCell} p-0 font-normal`}>Value</th>
          </tr>
        </thead>
        <tbody>
          {rows.map((r) => (
            <tr key={r[0]}>
              {r.map((v) => (
                <td key={v} className="h-[20px] border-r border-b border-[#353535] p-0 pl-[2px] font-medium whitespace-nowrap text-[#f4f4f4]">{v}</td>
              ))}
            </tr>
          ))}
        </tbody>
      </table>
      {svi && <div className="absolute top-[37px] -left-[2px] h-[30px] w-[236px] border-4 border-[#ffcc33]" />}
    </div>
  );
}

/* ---------- window ---------- */

function AppWindow({ id, variant, created }) {
  return (
    <article className="flex flex-1 flex-col [font-family:'Open_Sans','Noto_Sans',sans-serif]">
      <header className="flex h-[17px] items-center justify-between pr-[14px] pl-[2px]">
        <div className="flex items-center gap-[4px] text-[8px] text-[#222]">
          <svg viewBox="0 0 10 10" className="size-[10px]" aria-hidden="true">
            <circle cx="5" cy="5" r="5" fill="#1230a8" />
            <path d="M5 2 7 1.5 8.5 3 7.5 4.5 8 6.5 6.5 8 5.5 6.5 4 5.5 4.5 3.5Z" fill="#9fc4f5" />
            <path d="M5.5 3.5 7 4.5 6 6Z" fill="#1230a8" />
          </svg>
          FloodAdapt
        </div>
        <div className="flex items-center gap-[22px]">
          <button type="button" aria-label="Minimize"><svg viewBox="0 0 8 8" className="size-[8px]"><path d="M0 4.5H8" stroke="#333" /></svg></button>
          <button type="button" aria-label="Restore"><svg viewBox="0 0 8 8" className="size-[8px]"><path d="M.5 2.5H5.5V7.5H.5ZM2.5 2.5V.5H7.5V5.5H5.5" fill="none" stroke="#222" /></svg></button>
          <button type="button" aria-label="Close"><svg viewBox="0 0 8 8" className="size-[8px]"><path d="M.5.5 7.5 7.5M7.5.5.5 7.5" stroke="#222" /></svg></button>
        </div>
      </header>
      <div className="relative flex flex-1 flex-col bg-[#393939] text-[7px] leading-[10px] text-[#e8e8e8]">
        <nav className="flex h-[14px] items-center gap-[9px] border border-[#1e1e1e] bg-linear-to-b from-[#3a3a3a] to-[#2c2c2c] pl-[5px] text-[8px]">
          <button type="button">File</button>
          <button type="button">View</button>
          <button type="button">Help</button>
        </nav>
        <div className="flex gap-[10px] pt-[10px] pr-[13px] pl-[10px]">
          <FloodMap id={id} variant={variant} />
          <Infographic variant={variant} />
        </div>
        <div className="mt-[11px] mr-[9px] mb-[10px] ml-[9px]">
          <div role="tablist" className="flex h-[16px] gap-px">
            {tabs.map((t) => (
              <button
                key={t}
                type="button"
                role="tab"
                aria-selected={t === "Output"}
                className={`border-t border-r-2 border-[#555] px-[9px] whitespace-nowrap first:border-l ${t === "Output" ? "bg-[#505050] text-white" : "bg-[#0b0b0b] text-[#c4c4c4]"}`}
              >
                {t}
              </button>
            ))}
          </div>
          <div className="flex h-[134px] items-start border border-[#5a5a5a] pt-[9px] pl-[9px]">
            <ScenarioTable created={created} />
            <div className="mt-[43px] ml-[37px] w-[133px]">
              <Check id={`${id}-flood`} label="Flood Map" checked />
              <Check id={`${id}-damages`} label="Building Damages" checked />
              <Check id={`${id}-aggregated`} label="Aggregated Damages" />
              <Check id={`${id}-roads`} label="Road flooding" />
            </div>
            <div className="mt-[62px] mr-[19px] w-[137px]">
              <Picker id={`${id}-layer`} label="Show Layer" value="No Additional Layer" />
              <Picker id={`${id}-aggregation`} label="Aggregation" value="Census Blockgroup" />
            </div>
            <MetricsTable variant={variant} />
          </div>
        </div>
        <button type="button" aria-label="Collapse infographics" className="absolute top-[261px] right-[2px]">
          <svg viewBox="0 0 9 11" className="h-[11px] w-[9px]"><path d="M0 0 9 5.5 0 11Z" fill="#fff" /></svg>
        </button>
        <button type="button" aria-label="Collapse panel" className={`absolute right-0 ${variant === "svi" ? "top-[601px]" : "top-[630px]"}`}>
          <svg viewBox="0 0 3 10" className="h-[10px] w-[3px]"><path d="M0 0 3 3V7L0 10Z" fill="#fff" /></svg>
        </button>
        {variant === "svi" && (
          <Note className="absolute top-[531px] right-[14px] h-[122px] w-[254px] pt-[14px]">
            Extra metric:
            <br />
            How many highly socially
            <br />
            vulnerable homes were
            <br />
            flooded
          </Note>
        )}
      </div>
    </article>
  );
}

function Column({ title, children }) {
  return (
    <section className="flex min-w-0 flex-col gap-[59px]">
      <h1 className="h-[42px] w-[563px] self-center border border-[#1f3050] bg-[#ffd966] text-center [font-family:Lato,'Open_Sans',sans-serif] text-[18px] leading-[40px] font-bold text-black">
        {title}
      </h1>
      {children}
    </section>
  );
}

export default function App() {
  return (
    <main className="grid min-h-screen min-w-[2560px] grid-cols-2 gap-[27px] bg-white">
      <Column title="Baseline FloodAdapt configuration">
        <AppWindow id="baseline" variant="baseline" created="2024-09-05 11:19" />
      </Column>
      <Column title="Inclusion of an SVI layer">
        <AppWindow id="svi" variant="svi" created="2024-09-05 11:52" />
      </Column>
    </main>
  );
}
